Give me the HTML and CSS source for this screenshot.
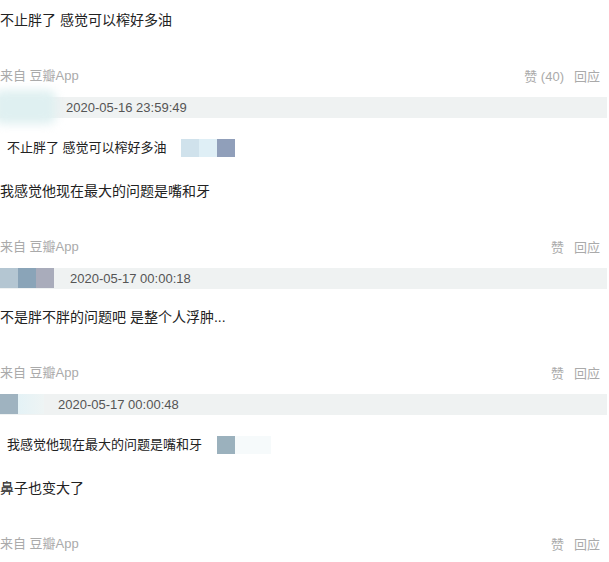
FILE: index.html
```html
<!DOCTYPE html>
<html lang="zh-CN">
<head>
<meta charset="utf-8">
<title>评论</title>
<link rel="stylesheet" href="styles.css">
</head>
<body>
<div class="thread">
  <p class="content first">不止胖了 感觉可以榨好多油</p>
  <div class="meta">
    <span class="src">来自 豆瓣App</span>
    <span class="acts"><span>赞 (40)</span><span>回应</span></span>
  </div>

  <div class="comment">
    <div class="head">
      <span class="avatar av1"><span class="blur"></span></span>
      <span class="time">2020-05-16 23:59:49</span>
    </div>
    <div class="quote">
      <span>不止胖了 感觉可以榨好多油</span>
      <span class="mosaic mq1"><i class="c1"></i><i class="c2"></i><i class="c3"></i></span>
    </div>
    <p class="content after-quote">我感觉他现在最大的问题是嘴和牙</p>
    <div class="meta">
      <span class="src">来自 豆瓣App</span>
      <span class="acts"><span>赞</span><span>回应</span></span>
    </div>
  </div>

  <div class="comment">
    <div class="head">
      <span class="avatar av2"><i class="p1"></i><i class="p2"></i><i class="p3"></i></span>
      <span class="time">2020-05-17 00:00:18</span>
    </div>
    <p class="content">不是胖不胖的问题吧 是整个人浮肿...</p>
    <div class="meta">
      <span class="src">来自 豆瓣App</span>
      <span class="acts"><span>赞</span><span>回应</span></span>
    </div>
  </div>

  <div class="comment">
    <div class="head">
      <span class="avatar av3"><i class="p4"></i><i class="fade"></i></span>
      <span class="time">2020-05-17 00:00:48</span>
    </div>
    <div class="quote">
      <span>我感觉他现在最大的问题是嘴和牙</span>
      <span class="mosaic mq2"><i class="c4"></i><i class="c5"></i></span>
    </div>
    <p class="content after-quote">鼻子也变大了</p>
    <div class="meta">
      <span class="src">来自 豆瓣App</span>
      <span class="acts"><span>赞</span><span>回应</span></span>
    </div>
  </div>
</div>
</body>
</html>
```

FILE: styles.css
```css
* { box-sizing: border-box; }

html, body {
  margin: 0;
  padding: 0;
  background: #ffffff;
}

body {
  font-family: "Liberation Sans", "Noto Sans CJK SC", sans-serif;
  color: #222222;
  font-size: 14px;
  line-height: 20px;
  overflow: hidden;
}

.thread {
  padding: 10px 2px 0 0;
  display: flex;
  flex-direction: column;
}

.content {
  margin: 18px 0 0 0;
  font-size: 14px;
  line-height: 20px;
  color: #222222;
}

.content.first { margin-top: 0; }
.content.after-quote { margin-top: 23px; }

.meta {
  margin-top: 36px;
  display: flex;
  justify-content: space-between;
  align-items: center;
  font-size: 13px;
  line-height: 20px;
  color: #aaaaaa;
  padding-right: 7px;
}

.acts {
  display: flex;
  gap: 10px;
  position: relative;
  top: 1px;
}

.head {
  margin-top: 11px;
  height: 21px;
  background: #eff2f2;
  display: flex;
  align-items: center;
}

.avatar {
  height: 21px;
  display: flex;
  align-items: stretch;
  flex: none;
  position: relative;
}

.avatar i { display: block; height: 20px; }

.av1 { width: 66px; }
.av1 .blur {
  position: absolute;
  left: -6px;
  top: -7px;
  width: 62px;
  height: 34px;
  background: #dff0f1;
  filter: blur(5px);
  border-radius: 8px;
}

.av2 { width: 70px; }
.p1 { width: 18px; background: #b4c6d2; }
.p2 { width: 18px; background: #8aa4b8; }
.p3 { width: 18px; background: #a9acbb; }

.av3 { width: 58px; }
.p4 { width: 18px; background: #9fb3c0; }
.fade { width: 26px; background: linear-gradient(90deg, #e4f2f6, #eef4f4); }

.time {
  font-family: "Liberation Sans", Arial, sans-serif;
  font-size: 13px;
  color: #555555;
}

.quote {
  margin-top: 20px;
  padding-left: 7px;
  display: flex;
  align-items: center;
  font-size: 13px;
  line-height: 20px;
  color: #222222;
}

.mosaic {
  display: flex;
  margin-left: 14px;
}
.mosaic i { display: block; width: 18px; height: 18px; }
.mq2 { margin-left: 15px; }

.c1 { background: #d0e2ec; }
.c2 { background: #dfeff6; }
.c3 { background: #909fba; }
.c4 { background: #9bb1bd; }
.c5 { width: 36px !important; background: #f6fafb; }
```
